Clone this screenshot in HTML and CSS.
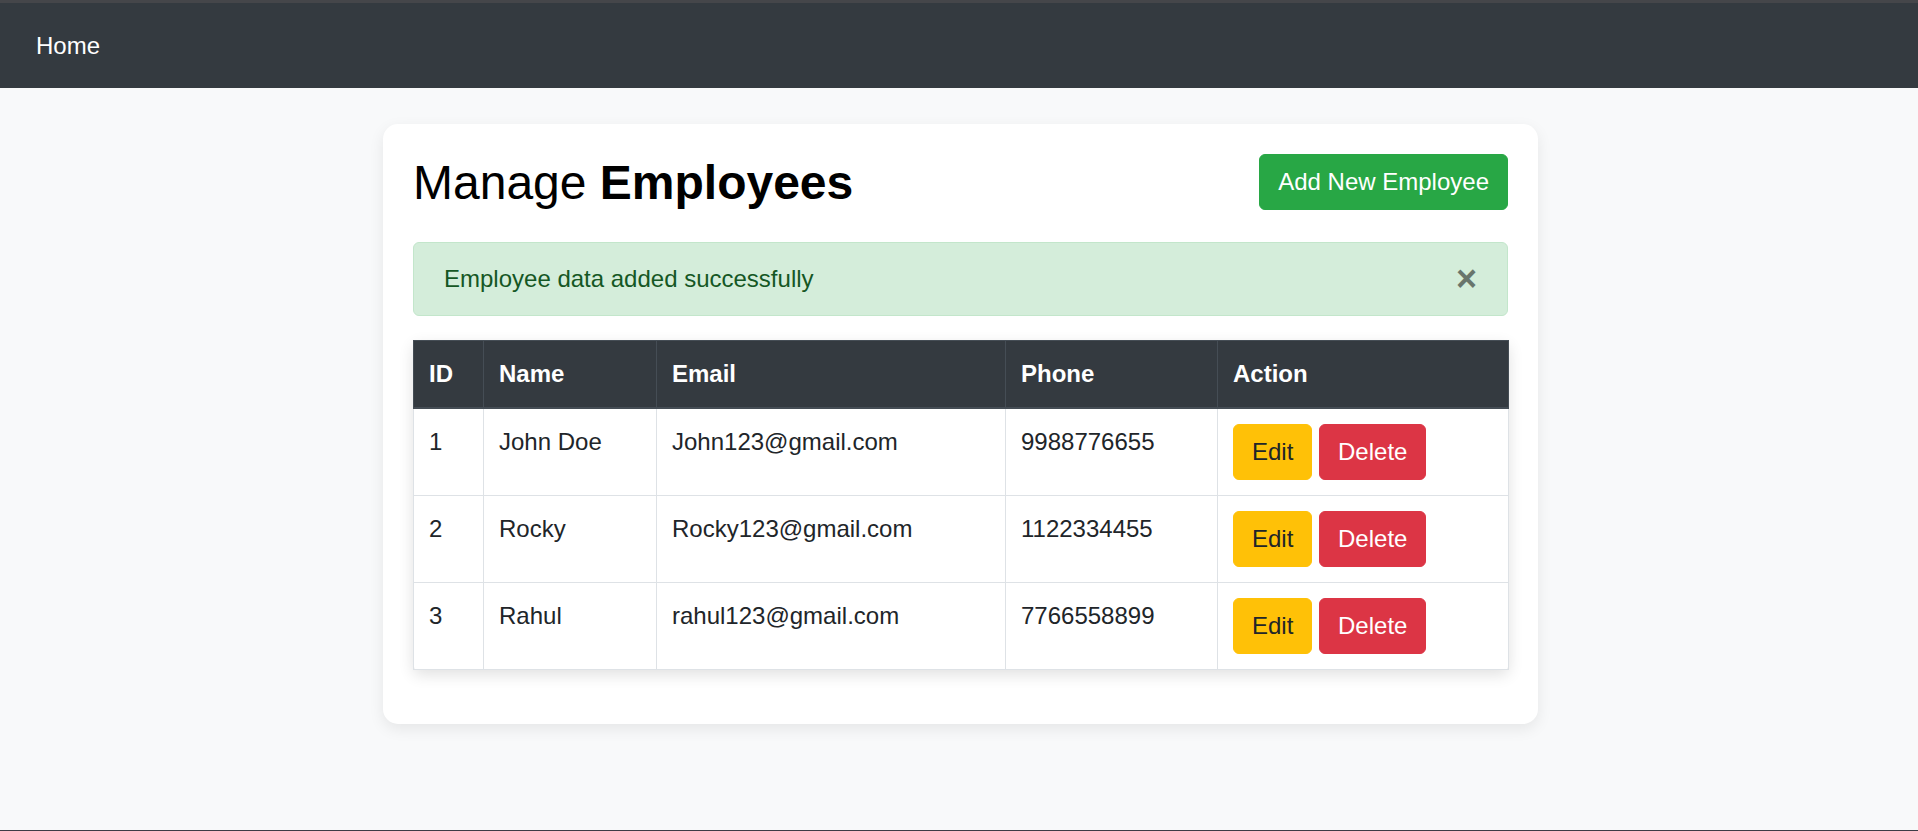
FILE: index.html
```html
<!DOCTYPE html>
<html lang="en">
<head>
<meta charset="utf-8">
<title>Manage Employees</title>
<link rel="stylesheet" href="styles.css">
</head>
<body>
<div class="page">
  <nav class="navbar">
    <a class="nav-link" href="#">Home</a>
  </nav>
  <main class="card">
    <div class="card-header">
      <h2 class="title">Manage <b>Employees</b></h2>
      <button class="btn btn-success">Add New Employee</button>
    </div>
    <div class="alert">
      Employee data added successfully
      <button class="close" aria-label="Close">&times;</button>
    </div>
    <table class="table">
      <colgroup>
        <col class="c-id"><col class="c-name"><col class="c-email"><col class="c-phone"><col class="c-action">
      </colgroup>
      <thead>
        <tr><th>ID</th><th>Name</th><th>Email</th><th>Phone</th><th>Action</th></tr>
      </thead>
      <tbody>
        <tr>
          <td>1</td><td>John Doe</td><td>John123@gmail.com</td><td>9988776655</td>
          <td><button class="btn btn-warning">Edit</button> <button class="btn btn-danger">Delete</button></td>
        </tr>
        <tr>
          <td>2</td><td>Rocky</td><td>Rocky123@gmail.com</td><td>1122334455</td>
          <td><button class="btn btn-warning">Edit</button> <button class="btn btn-danger">Delete</button></td>
        </tr>
        <tr>
          <td>3</td><td>Rahul</td><td>rahul123@gmail.com</td><td>7766558899</td>
          <td><button class="btn btn-warning">Edit</button> <button class="btn btn-danger">Delete</button></td>
        </tr>
      </tbody>
    </table>
  </main>
  <div class="window-edge"></div>
</div>
</body>
</html>
```
FILE: styles.css
```css
* { box-sizing: border-box; }

html, body {
  margin: 0;
  padding: 0;
}

body {
  background: #f8f9fa;
  font-family: "Liberation Sans", Arial, sans-serif;
  font-size: 24px;
  line-height: 36px;
  color: #212529;
}

.page {
  min-height: 100vh;
  display: flex;
  flex-direction: column;
}

.navbar {
  height: 88px;
  background: #343a40;
  border-top: 3px solid #45464a;
  display: flex;
  align-items: center;
  padding-left: 36px;
}

.nav-link {
  color: #ffffff;
  text-decoration: none;
  font-size: 24px;
  line-height: 36px;
}

.card {
  width: 1155px;
  margin: 36px 0 0 calc(50% - 576px);
  background: #ffffff;
  border-radius: 15px;
  padding: 30px;
  box-shadow: 0 5px 15px rgba(0, 0, 0, 0.08);
}

.card-header {
  display: flex;
  justify-content: space-between;
  align-items: flex-start;
  margin-bottom: 30px;
}

.title {
  margin: 0;
  font-size: 48px;
  line-height: 57.6px;
  font-weight: 400;
  color: #000;
}

.title b { font-weight: 700; }

.btn {
  display: inline-block;
  font-family: inherit;
  font-size: 24px;
  line-height: 36px;
  padding: 9px 18px;
  border: 1px solid transparent;
  border-radius: 6px;
  cursor: pointer;
  vertical-align: baseline;
}

.btn-success { background: #28a745; border-color: #28a745; color: #fff; }
.btn-warning { background: #ffc107; border-color: #ffc107; color: #212529; }
.btn-danger { background: #dc3545; border-color: #dc3545; color: #fff; }

.alert {
  position: relative;
  background: #d4edda;
  border: 1px solid #c3e6cb;
  color: #155724;
  border-radius: 6px;
  padding: 18px 30px;
  margin-bottom: 24px;
}

.close {
  position: absolute;
  top: 0;
  bottom: 0;
  right: 30px;
  display: flex;
  align-items: center;
  background: none;
  border: 0;
  padding: 0;
  font-family: inherit;
  font-size: 36px;
  font-weight: 700;
  line-height: 1;
  color: #000;
  opacity: 0.5;
  cursor: pointer;
}

.table {
  width: 100%;
  border-collapse: collapse;
  table-layout: fixed;
  margin-bottom: 24px;
  box-shadow: 0 5px 15px rgba(0, 0, 0, 0.12);
  border-radius: 6px;
}

.c-id { width: 70px; }
.c-name { width: 173px; }
.c-email { width: 349px; }
.c-phone { width: 212px; }
.c-action { width: 291px; }

.table th,
.table td {
  padding: 15px 15px;
  text-align: left;
  vertical-align: top;
}

.table th {
  background: #343a40;
  color: #fff;
  font-weight: 700;
  border: 1px solid #454d55;
  border-bottom: 2px solid #454d55;
}

.table td {
  border: 1px solid #dee2e6;
  white-space: nowrap;
}

.window-edge {
  margin-top: auto;
  height: 1px;
  background: #3c3c46;
}
```
